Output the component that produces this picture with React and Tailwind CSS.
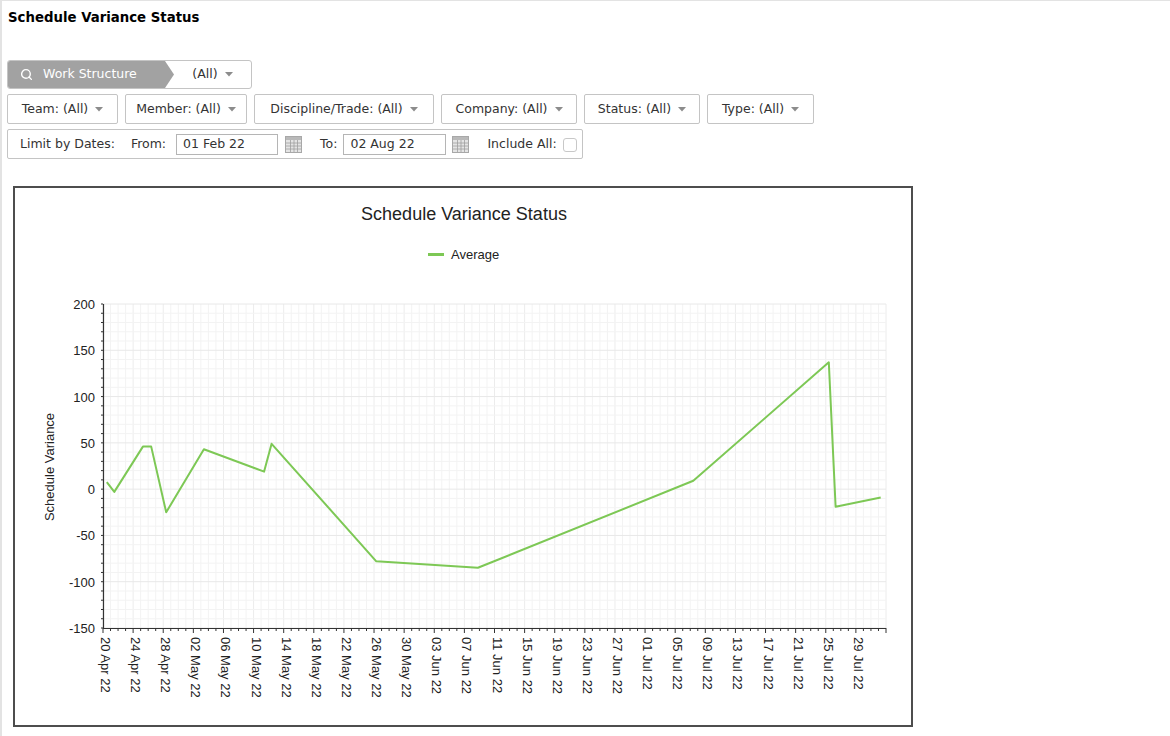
import React from 'react';
import { Search } from 'lucide-react';

const ui = { fontFamily: '"DejaVu Sans", Verdana, sans-serif' };
const chartFont = '"Liberation Sans", Arial, sans-serif';
const GREEN = '#7dc855';

// plot area in page pixels
const X0 = 103;
const X1 = 886;
const Y_TOP = 304;
const Y_BOT = 628;
const DAYS = 104;
const pxDay = (X1 - X0) / DAYS;
const xOf = (d) => X0 + d * pxDay;
const yOf = (v) => Y_TOP + ((200 - v) / 350) * (Y_BOT - Y_TOP);

const MONTHS = ['Jan', 'Feb', 'Mar', 'Apr', 'May', 'Jun', 'Jul', 'Aug', 'Sep', 'Oct', 'Nov', 'Dec'];
const start = Date.UTC(2022, 3, 20);
const dateLabels = Array.from({ length: 26 }, (_, i) => {
  const d = new Date(start + i * 4 * 86400000);
  return { day: i * 4, text: String(d.getUTCDate()).padStart(2, '0') + ' ' + MONTHS[d.getUTCMonth()] + ' 22' };
});

const points = [
  [0.5, 7.5], [1.5, -3], [5.3, 46], [6.4, 46], [8.4, -25], [13.4, 43], [21.4, 19],
  [22.4, 49], [36.3, -78], [49.8, -85], [78.4, 9], [96.4, 137], [97.3, -19], [103.3, -9],
];

const filters = [
  { label: 'Team', w: 'w-[111px]' },
  { label: 'Member', w: 'w-[122px]' },
  { label: 'Discipline/Trade', w: 'w-[180px]' },
  { label: 'Company', w: 'w-[136px]' },
  { label: 'Status', w: 'w-[116px]' },
  { label: 'Type', w: 'w-[107px]' },
];

const Caret = () => (
  <svg width="8" height="5" viewBox="0 0 8 5">
    <polygon points="0,0 8,0 4,4.5" fill="#8c8c8c" />
  </svg>
);

const CalendarIcon = () => (
  <svg width="17" height="17" viewBox="0 0 17 17">
    <rect x="0.5" y="0.5" width="16" height="16" fill="#e4e4e4" stroke="#a8a8a8" />
    <rect x="1" y="1" width="15" height="3" fill="#b9b9b9" />
    {[5.5, 9, 12.5].map((x) => (
      <line key={'v' + x} x1={x} y1="4" x2={x} y2="16" stroke="#a0a0a0" strokeWidth="0.8" />
    ))}
    {[7, 10, 13].map((y) => (
      <line key={'h' + y} x1="1" y1={y} x2="16" y2={y} stroke="#a0a0a0" strokeWidth="0.8" />
    ))}
  </svg>
);

const Chart = () => {
  const vGrid = Array.from({ length: DAYS + 1 }, (_, i) => i);
  const hGrid = Array.from({ length: 36 }, (_, i) => -150 + i * 10);
  const yLabels = [200, 150, 100, 50, 0, -50, -100, -150];
  const path = points.map(([d, v], i) => (i ? 'L' : 'M') + xOf(d).toFixed(1) + ' ' + yOf(v).toFixed(1)).join(' ');

  return (
    <svg width="896" height="537" viewBox="15 188 896 537" className="block" style={{ fontFamily: chartFont }}>
      <text x="464" y="220" textAnchor="middle" fontSize="18" fill="#222">Schedule Variance Status</text>
      <line x1="428" y1="254.5" x2="444" y2="254.5" stroke={GREEN} strokeWidth="3" />
      <text x="451" y="259" fontSize="13" fill="#222">Average</text>

      {vGrid.map((d) => (
        <line key={'vg' + d} x1={xOf(d)} y1={Y_TOP} x2={xOf(d)} y2={Y_BOT} stroke={d % 4 === 0 ? '#ececec' : '#f3f3f3'} strokeWidth="1" />
      ))}
      {hGrid.map((v) => (
        <line key={'hg' + v} x1={X0} y1={yOf(v)} x2={X1} y2={yOf(v)} stroke={v % 50 === 0 ? '#e8e8e8' : '#f3f3f3'} strokeWidth="1" />
      ))}

      {hGrid.map((v) => (
        <line key={'yt' + v} x1={X0 - 2} y1={yOf(v)} x2={X0} y2={yOf(v)} stroke="#333" strokeWidth="1" />
      ))}
      <line x1={X0 + 0.5} y1={Y_TOP} x2={X0 + 0.5} y2={Y_BOT} stroke="#333" strokeWidth="1.2" />
      <line x1={X0} y1={Y_BOT + 0.5} x2={X1} y2={Y_BOT + 0.5} stroke="#333" strokeWidth="1.2" />
      {vGrid.map((d) => (
        <line key={'xt' + d} x1={xOf(d)} y1={Y_BOT} x2={xOf(d)} y2={Y_BOT + (d % 4 === 0 ? 5 : 3)} stroke="#333" strokeWidth="1" />
      ))}

      {yLabels.map((v) => (
        <text key={'yl' + v} x="95" y={yOf(v) + 5} textAnchor="end" fontSize="13" fill="#222">{v}</text>
      ))}
      <text x="54" y="467" textAnchor="middle" fontSize="13" fill="#222" transform="rotate(-90 54 467)">Schedule Variance</text>

      {dateLabels.map((l) => {
        const x = xOf(l.day) - 2;
        return (
          <text key={l.text} x={x} y="637" fontSize="13" fill="#222" transform={`rotate(90 ${x} 637)`}>{l.text}</text>
        );
      })}

      <path d={path} fill="none" stroke={GREEN} strokeWidth="2" strokeLinejoin="round" />
    </svg>
  );
};

export default function App() {
  return (
    <div className="min-h-screen border-t border-l-2 border-[#e3e3e3] bg-white text-[12.5px] text-[#333]" style={ui}>
      <div className="pl-[6px] pt-[9px] text-[13.3px] font-bold leading-[16px] text-black">Schedule Variance Status</div>

      <div className="ml-[5px] mt-[34px] flex h-[29px] w-[245px] overflow-hidden rounded-[3px] border border-[#c4c4c4]">
        <div className="flex w-[166px] items-center bg-[#a2a2a2] pl-[12px] text-white [clip-path:polygon(0_0,157px_0,166px_50%,157px_100%,0_100%)]">
          <Search size={13} strokeWidth={2.6} />
          <span className="ml-[10px]">Work Structure</span>
        </div>
        <div className="flex flex-1 items-center justify-center gap-[7px]">
          <span>(All)</span>
          <Caret />
        </div>
      </div>

      <div className="ml-[5px] mt-[5px] flex gap-[7px]">
        {filters.map((f) => (
          <div key={f.label} className={`flex h-[30px] items-center justify-center gap-[7px] rounded-[2px] border border-[#c4c4c4] bg-white pt-px ${f.w}`}>
            <span>{f.label}: (All)</span>
            <Caret />
          </div>
        ))}
      </div>

      <div className="ml-[5px] mt-[5px] flex h-[30px] w-[576px] items-center rounded-[2px] border border-[#c4c4c4] pl-[12px] pt-px">
        <span>Limit by Dates:</span>
        <span className="ml-[16px]">From:</span>
        <div className="ml-[10px] flex h-[21px] w-[102px] items-center border border-[#b5b5b5] px-[6px]">01 Feb 22</div>
        <div className="ml-[7px]"><CalendarIcon /></div>
        <span className="ml-[18px]">To:</span>
        <div className="ml-[6px] flex h-[21px] w-[103px] items-center border border-[#b5b5b5] px-[6px]">02 Aug 22</div>
        <div className="ml-[6px]"><CalendarIcon /></div>
        <span className="ml-[18px]">Include All:</span>
        <div className="ml-[6px] h-[14px] w-[14px] rounded-[3px] border border-[#c8c8c8] bg-white" />
      </div>

      <div className="ml-[11px] mt-[27px] h-[541px] w-[900px] border-2 border-[#4d4d4d] bg-white">
        <Chart />
      </div>
    </div>
  );
}
